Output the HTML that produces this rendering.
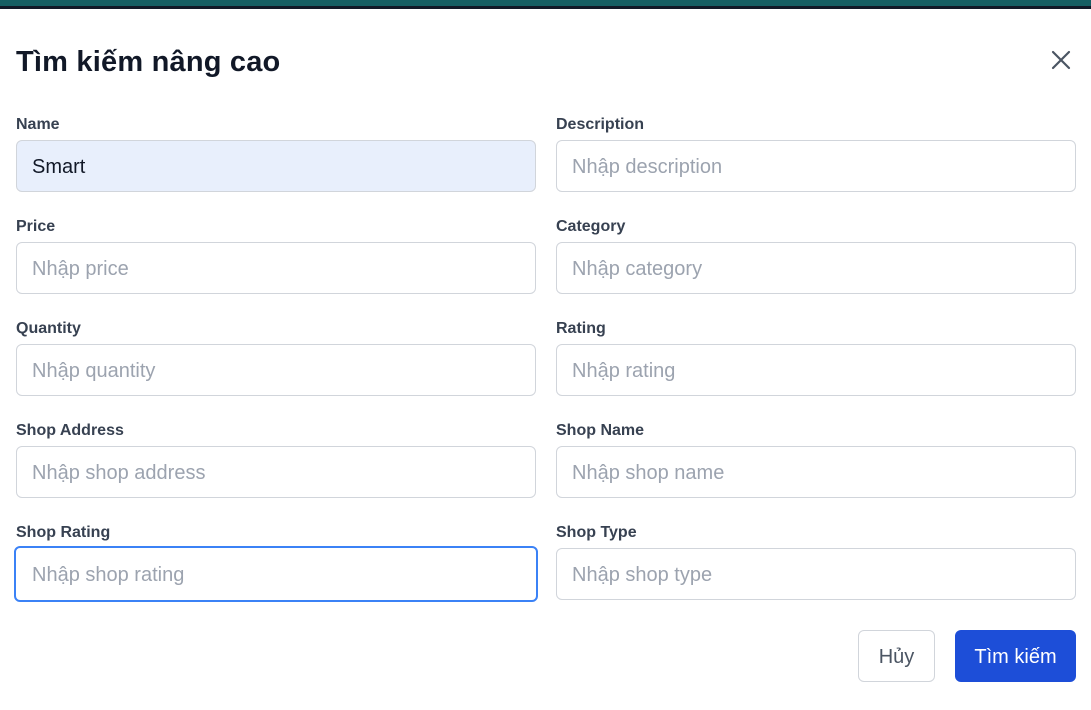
<!DOCTYPE html>
<html><head><meta charset="utf-8"><style>
*{box-sizing:border-box;margin:0;padding:0}
body{width:1091px;height:710px;background:#fff;font-family:"Liberation Sans",sans-serif;position:relative;overflow:hidden}
.top1{position:absolute;left:0;top:0;width:1091px;height:6px;background:#155e63}
.top2{position:absolute;left:0;top:6px;width:1091px;height:3px;background:#111827}
h1{position:absolute;left:16px;top:46px;font-size:29px;font-weight:bold;color:#111827;letter-spacing:0.2px}
.x{position:absolute;left:1049px;top:48px}
.lab{position:absolute;font-size:16px;font-weight:bold;color:#374151;margin-top:1px}
.in{position:absolute;width:520px;height:52px;border:1px solid #d1d5db;border-radius:6px;font-size:20px;color:#9ca3af;padding-left:15px;line-height:53px;background:#fff}
.in.f{background:#e8effc;color:#111827}
.btn{position:absolute;top:630px;height:52px;border-radius:6px;font-size:20px;line-height:54px;text-align:center}
</style></head><body>
<div class="top1"></div><div class="top2"></div>
<h1>Tìm kiếm nâng cao</h1>
<svg class="x" width="24" height="24" viewBox="0 0 24 24"><path d="M4 4L20 20M20 4L4 20" stroke="#4b5563" stroke-width="2.2" stroke-linecap="round"/></svg>

<div class="lab" style="left:16px;top:115px">Name</div>
<div class="in f" style="left:16px;top:140px">Smart</div>
<div class="lab" style="left:556px;top:115px">Description</div>
<div class="in" style="left:556px;top:140px">Nhập description</div>

<div class="lab" style="left:16px;top:217px">Price</div>
<div class="in" style="left:16px;top:242px">Nhập price</div>
<div class="lab" style="left:556px;top:217px">Category</div>
<div class="in" style="left:556px;top:242px">Nhập category</div>

<div class="lab" style="left:16px;top:319px">Quantity</div>
<div class="in" style="left:16px;top:344px">Nhập quantity</div>
<div class="lab" style="left:556px;top:319px">Rating</div>
<div class="in" style="left:556px;top:344px">Nhập rating</div>

<div class="lab" style="left:16px;top:421px">Shop Address</div>
<div class="in" style="left:16px;top:446px">Nhập shop address</div>
<div class="lab" style="left:556px;top:421px">Shop Name</div>
<div class="in" style="left:556px;top:446px">Nhập shop name</div>

<div class="lab" style="left:16px;top:523px">Shop Rating</div>
<div class="in" style="left:14px;top:546px;width:524px;height:56px;line-height:55px;padding-left:16px;border:2px solid #3b82f6">Nhập shop rating</div>
<div class="lab" style="left:556px;top:523px">Shop Type</div>
<div class="in" style="left:556px;top:548px">Nhập shop type</div>

<div class="btn" style="left:858px;width:77px;border:1px solid #d1d5db;color:#4b5563;line-height:52px">Hủy</div>
<div class="btn" style="left:955px;width:121px;background:#1d4ed8;color:#fff">Tìm kiếm</div>
</body></html>
